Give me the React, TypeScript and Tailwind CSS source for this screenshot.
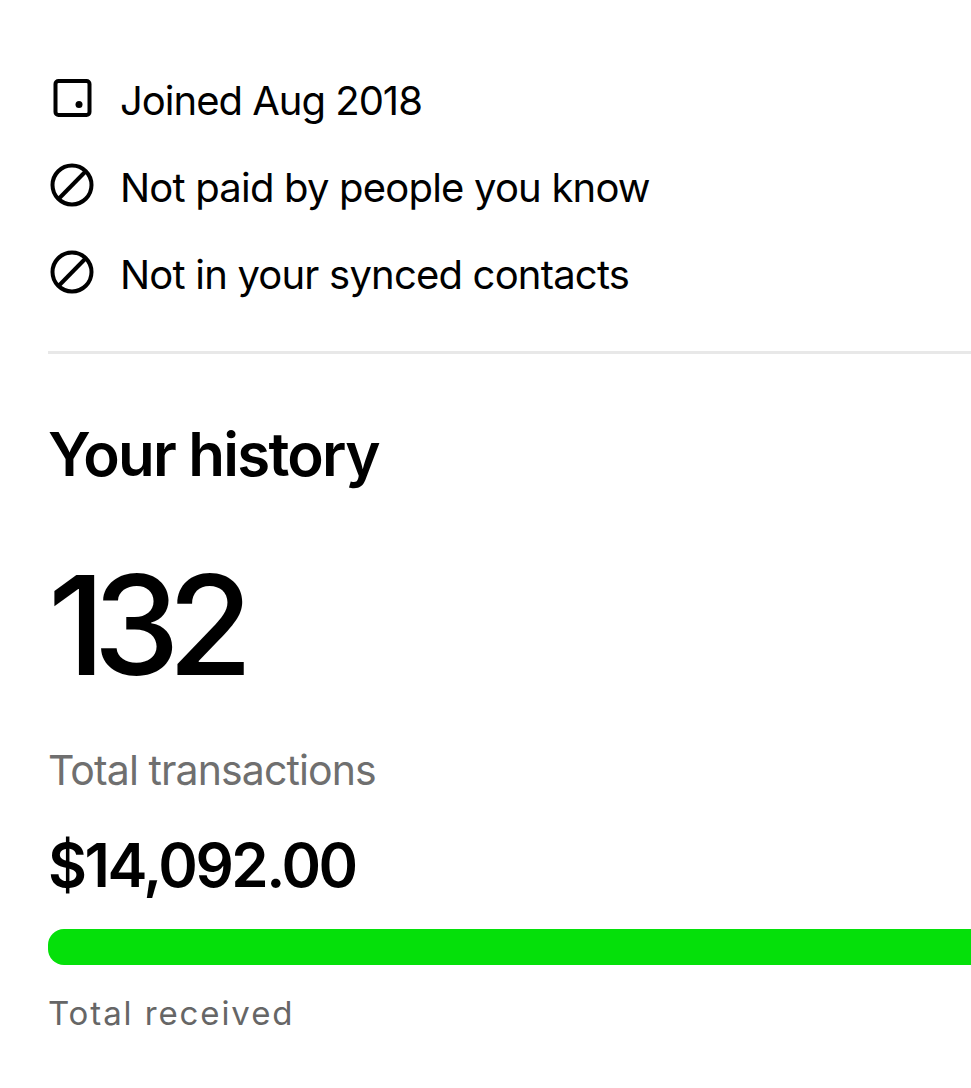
const font = "font-['Inter','Liberation_Sans',sans-serif]";

function CalendarIcon() {
  return (
    <svg width="44" height="44" viewBox="0 0 44 44" fill="none" stroke="#000" strokeWidth="4">
      <rect x="7.5" y="2" width="34" height="34" rx="3" />
      <circle cx="31" cy="25.5" r="3.5" fill="#000" stroke="none" />
    </svg>
  );
}

function BlockedIcon() {
  return (
    <svg width="44" height="44" viewBox="0 0 44 44" fill="none" stroke="#000" strokeWidth="4" className="overflow-visible">
      <circle cx="24" cy="19" r="19.5" />
      <path d="M11 32.5 L37.5 5.5" />
    </svg>
  );
}

function InfoRow({ icon, label, tight }: { icon: React.ReactNode; label: string; tight?: boolean }) {
  return (
    <div className="flex h-[87px] items-center gap-[28px]">
      {icon}
      <span className={`text-[40px] text-black ${tight ? "tracking-[-1px]" : "tracking-[-0.8px]"}`}>{label}</span>
    </div>
  );
}

export default function App() {
  return (
    <div className={`${font} h-[1088px] w-[971px] overflow-hidden bg-white pl-[48px] pt-[57px]`}>
      <InfoRow icon={<CalendarIcon />} label="Joined Aug 2018" tight />
      <InfoRow icon={<BlockedIcon />} label="Not paid by people you know" />
      <InfoRow icon={<BlockedIcon />} label="Not in your synced contacts" />
      <div className="mt-[33px] h-[3px] bg-[#e8e8e8]" />
      <h2 className="mt-[64px] text-[60px] leading-[72px] font-semibold tracking-[-1.75px] text-black">
        Your history
      </h2>
      <p className="mt-[60px] text-[138px] leading-[150px] font-medium tracking-[-12px] text-black">132</p>
      <p className="mt-[45px] text-[41px] leading-[50px] tracking-[-0.9px] text-[#6f6f6f]">Total transactions</p>
      <p className="mt-[34px] text-[60px] leading-[72px] font-semibold tracking-[-2.4px] text-black">$14,092.00</p>
      <div className="mt-[28px] h-[36px] rounded-l-[16px] bg-[#05e00a]" />
      <p className="mt-[28px] text-[33px] leading-[40px] tracking-[1.9px] text-[#666666]">Total received</p>
    </div>
  );
}
